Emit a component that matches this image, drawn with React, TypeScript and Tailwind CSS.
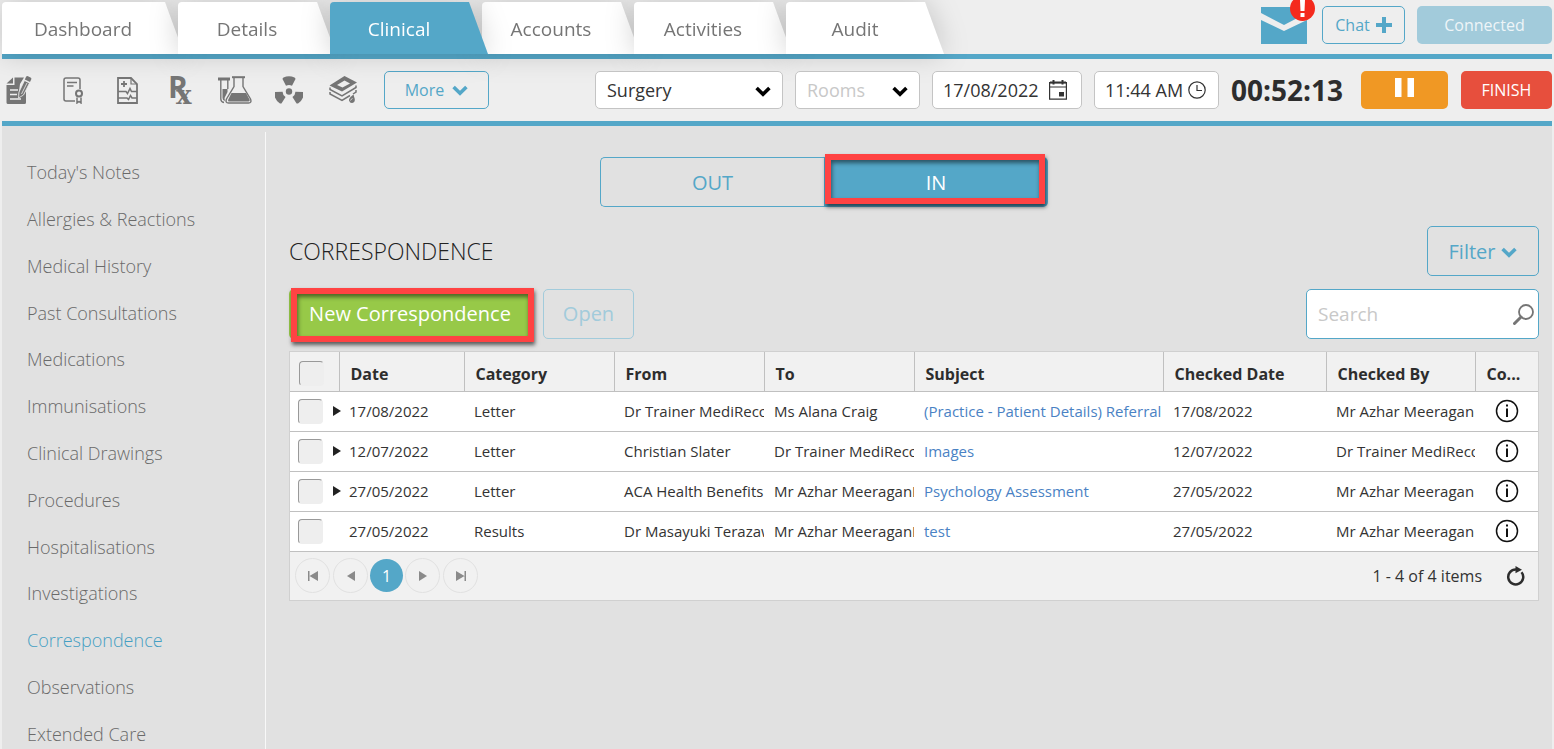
import React from 'react';

const tabs = ['Dashboard', 'Details', 'Clinical', 'Accounts', 'Activities', 'Audit'];
const activeTab = 'Clinical';

const menu = [
  "Today's Notes",
  'Allergies & Reactions',
  'Medical History',
  'Past Consultations',
  'Medications',
  'Immunisations',
  'Clinical Drawings',
  'Procedures',
  'Hospitalisations',
  'Investigations',
  'Correspondence',
  'Observations',
  'Extended Care',
];

type Letter = {
  date: string;
  category: string;
  from: string;
  to: string;
  subject: string;
  checkedDate: string;
  checkedBy: string;
  expandable: boolean;
};

const letters: Letter[] = [
  {
    date: '17/08/2022',
    category: 'Letter',
    from: 'Dr Trainer MediRecords',
    to: 'Ms Alana Craig',
    subject: '(Practice - Patient Details) Referral',
    checkedDate: '17/08/2022',
    checkedBy: 'Mr Azhar Meeragan',
    expandable: true,
  },
  {
    date: '12/07/2022',
    category: 'Letter',
    from: 'Christian Slater',
    to: 'Dr Trainer MediRecords',
    subject: 'Images',
    checkedDate: '12/07/2022',
    checkedBy: 'Dr Trainer MediRecords',
    expandable: true,
  },
  {
    date: '27/05/2022',
    category: 'Letter',
    from: 'ACA Health Benefits',
    to: 'Mr Azhar MeeraganL',
    subject: 'Psychology Assessment',
    checkedDate: '27/05/2022',
    checkedBy: 'Mr Azhar Meeragan',
    expandable: true,
  },
  {
    date: '27/05/2022',
    category: 'Results',
    from: 'Dr Masayuki Terazawa',
    to: 'Mr Azhar MeeraganL',
    subject: 'test',
    checkedDate: '27/05/2022',
    checkedBy: 'Mr Azhar Meeragan',
    expandable: false,
  },
];

const columns = ['Date', 'Category', 'From', 'To', 'Subject', 'Checked Date', 'Checked By', 'Co...'];

const Chevron: React.FC<{ className?: string }> = ({ className }) => (
  <svg width="16" height="11" viewBox="0 0 16 11" fill="none" className={className} aria-hidden="true">
    <path d="M1.6 2 8 8.2 14.4 2" stroke="currentColor" strokeWidth="3.6" />
  </svg>
);

const NotesIcon = () => (
  <svg width="26" height="28" viewBox="0 0 26 28" fill="currentColor" aria-hidden="true">
    <path d="M7 1.5v6H.5z" />
    <path d="M8.5 1.5H18L14 8l-1.5 11 5.5-1 2-3v11.5q0 1.5-1.5 1.5H2q-1.5 0-1.5-1.5V9h8z" />
    <path d="M4 14h8M4 18.5h7M4 23h11" stroke="#eeeeee" strokeWidth="1.5" />
    <path d="M18.500 4.500l5 2.500L17.500 19l-5 3 .5-6z" stroke="#eeeeee" strokeWidth=".8" />
    <path d="M20 1q.7-1.400 2-.8l2.500 1.200q1.300.8.7 2L24 6 18.800 3.500z" />
    <path d="M21 7 15.500 18" stroke="#eeeeee" strokeWidth=".8" />
  </svg>
);

const CertificateIcon = () => (
  <svg width="21" height="27" viewBox="0 0 21 27" fill="none" stroke="currentColor" aria-hidden="true">
    <path d="M12 24H3q-2 0-2-2V3q0-2 2-2h12q2 0 2 2v9" strokeWidth="1.5" />
    <path d="M4 5.5h10M4 9h6.5" strokeWidth="1.3" />
    <circle cx="16" cy="16.5" r="3" strokeWidth="2" />
    <path d="M14 20.5V26l2-1.5 2 1.5v-5.5" strokeWidth="1.5" />
  </svg>
);

const ReportIcon = () => (
  <svg width="21" height="27" viewBox="0 0 21 27" fill="none" stroke="currentColor" aria-hidden="true">
    <path d="M1 1h13l6 6v19H1z" strokeWidth="1.8" />
    <path d="M14 1v6h6" strokeWidth="1.2" />
    <path d="M4 7h6M7 4v6" strokeWidth="1.8" />
    <path d="M1 14.5h8l1.5 2 2.5-5 1.5 3H20M1 21h9l1.5 1.5 2-4 1.5 2.5h5" strokeWidth="1.5" />
  </svg>
);

const RxIcon = () => (
  <svg width="26" height="30" viewBox="0 0 26 30" fill="currentColor" className="overflow-visible" aria-hidden="true">
    <text x="0" y="23" fontFamily="Open Sans, sans-serif" fontWeight="700" fontSize="30">
      R
      <tspan x="8" y="29" fontFamily="DejaVu Serif, serif" fontSize="26">
        x
      </tspan>
    </text>
  </svg>
);

const LabIcon = () => (
  <svg width="34" height="28" viewBox="0 0 34 28" fill="none" stroke="currentColor" aria-hidden="true">
    <path d="M0 3h12" strokeWidth="3" />
    <path d="M2.8 4v19q0 3 3.2 3.5" strokeWidth="1.4" />
    <path d="M9.8 4v9" strokeWidth="1.4" />
    <path d="M4.5 13h5v3l-3 6 .5 3q-2.5-.5-2.5-3z" fill="currentColor" stroke="none" />
    <path d="M14 1.2h13" strokeWidth="2" />
    <path d="M16 2v8.5L8.5 23q-1.5 4 2 4h20q3.5 0 2-4L25 10.500V2" strokeWidth="1.4" />
    <path d="M13.5 17h14.500l3.500 6.500q.8 2-1 2H11.500q-2 0-1.200-2z" fill="currentColor" stroke="none" />
  </svg>
);

const blade = 'M7.5 3Q7.500 2 8.500 1.500 14-1 19.500 1.500q1 .5 1 1.500L17 9.800q-3-1.600-6 0z';

const ImagingIcon = () => (
  <svg width="28" height="28" viewBox="0 0 28 28" fill="currentColor" aria-hidden="true">
    <circle cx="14" cy="15.500" r="3.200" />
    <path d={blade} />
    <path d={blade} transform="rotate(120 14 15.5)" />
    <path d={blade} transform="rotate(240 14 15.5)" />
  </svg>
);

const PathologyIcon = () => (
  <svg width="29" height="28" viewBox="0 0 29 28" fill="none" stroke="currentColor" aria-hidden="true">
    <path
      d="M15.500 0 28 6.500 13 15.500.5 9.500zM15.500 4.500 8 9l5.500 2.500L21 7.500z"
      fill="currentColor"
      fillRule="evenodd"
      stroke="none"
    />
    <path d="M1 11.500v2L13 20l14-8.500V9.500M1 16v2l12 6.500 8-5M27 14v2l-3 2" strokeWidth="1.500" />
    <path d="M24.500 18.500q-5 3.500-4.500 6 .8 2.800 3.200 2.600 3-.7 2.600-4-.6-2-1.300-4.600z" fill="currentColor" stroke="none" />
    <path d="M21.500 24.500q.5-1.500 2-2" stroke="#eeeeee" strokeWidth=".8" />
  </svg>
);

const tools = [
  { name: 'Notes', icon: <NotesIcon /> },
  { name: 'Certificate', icon: <CertificateIcon /> },
  { name: 'Report', icon: <ReportIcon /> },
  { name: 'Prescription', icon: <RxIcon /> },
  { name: 'Lab', icon: <LabIcon /> },
  { name: 'Imaging', icon: <ImagingIcon /> },
  { name: 'Pathology', icon: <PathologyIcon /> },
];

const InfoIcon = () => (
  <svg width="24" height="24" viewBox="0 0 24 24" fill="none" stroke="#111" aria-hidden="true">
    <circle cx="12" cy="12" r="10.5" strokeWidth="1.5" />
    <path d="M12 9.500V18" strokeWidth="2" />
    <path d="M12 5.500v2" strokeWidth="2" />
  </svg>
);

const Tab: React.FC<{ name: string }> = ({ name }) => {
  const active = name === activeTab;
  const first = name === tabs[0];
  return (
    <div
      className={`-mr-1.5 drop-shadow-[0_0_14px_rgba(0,0,0,0.18)] ${
        active ? 'relative z-10' : ''
      }`}
    >
      <button
        className={`h-[52px] pt-0.5 pr-5 rounded-tl-[4px] text-[19px] [clip-path:polygon(0_0,calc(100%-19px)_0,100%_100%,0_100%)] ${
          first ? 'w-[182px]' : 'w-[158px]'
        } ${active ? 'bg-[#54a7c8] text-white' : 'bg-white text-[#757575]'}`}
      >
        {name}
      </button>
    </div>
  );
};

const Checkbox: React.FC<{ label: string }> = ({ label }) => (
  <input
    type="checkbox"
    aria-label={label}
    className="block shrink-0 appearance-none size-[25px] rounded-[4px] bg-[#eeeeee] border border-[#eeeeee] border-t-[#999] border-l-[#999]"
  />
);

const pagerButton =
  'flex items-center justify-center size-[35px] rounded-full border border-[#e1e1e1] text-[#8a8a8a]';

const Pager = () => (
  <nav className="flex items-center gap-[3px]" aria-label="Pages">
    <button className={pagerButton} aria-label="First page">
      <svg width="10" height="10" viewBox="0 0 10 10" fill="currentColor">
        <path d="M0 0h1.500v10H0zM10 0v10L1.500 5z" />
      </svg>
    </button>
    <button className={pagerButton} aria-label="Previous page">
      <svg width="8" height="10" viewBox="0 0 8 10" fill="currentColor">
        <path d="M8 0v10L0 5z" />
      </svg>
    </button>
    <button className="-mx-px size-[33px] rounded-full bg-[#54a7c8] text-white text-base">1</button>
    <button className={pagerButton} aria-label="Next page">
      <svg width="8" height="10" viewBox="0 0 8 10" fill="currentColor">
        <path d="M0 0v10l8-5z" />
      </svg>
    </button>
    <button className={pagerButton} aria-label="Last page">
      <svg width="10" height="10" viewBox="0 0 10 10" fill="currentColor">
        <path d="M8.500 0H10v10H8.500zM0 0v10l8.500-5z" />
      </svg>
    </button>
  </nav>
);

const highlight =
  'absolute pointer-events-none border-[6px] border-[#ff4343] shadow-[1px_3px_4px_rgba(0,0,0,0.6),inset_1px_3px_4px_rgba(0,0,0,0.5)]';

const Header = () => (
  <header className="flex justify-between border-b-[5px] border-[#54a7c8] pt-0.5">
    <nav className="flex">
      {tabs.map((name) => (
        <Tab key={name} name={name} />
      ))}
    </nav>
    <div className="flex items-start pt-1">
      <button className="relative mt-px mr-[15px]" aria-label="Messages">
        <svg width="46" height="37" viewBox="0 0 46 37" fill="#54a7c8">
          <path d="M0 0h46v6L23 18 0 6z" />
          <path d="M0 13l23 11 23-11v24H0z" />
        </svg>
        <span className="absolute -top-[11px] -right-2 size-[25px] rounded-full bg-[#f42a1d] flex items-center justify-center">
          <svg width="5" height="17" viewBox="0 0 5 17" fill="white">
            <path d="M0 0h5l-.5 11h-4zM.5 13h4v4h-4z" />
          </svg>
        </span>
      </button>
      <button className="flex items-center justify-center gap-1.5 w-[83px] h-[38px] mr-3 rounded-[5px] border border-[#54a7c8] text-[#54a7c8] text-base">
        Chat
        <svg width="16" height="16" viewBox="0 0 16 16" fill="currentColor" aria-hidden="true">
          <path d="M6 0h4v6h6v4h-6v6H6v-6H0V6h6z" />
        </svg>
      </button>
      <button className="w-[135px] h-[38px] rounded-[5px] bg-[#a2cbdb] text-[#eef5f8] text-base">
        Connected
      </button>
    </div>
  </header>
);

const Toolbar = () => (
  <div className="flex items-center justify-between h-[67px] border-b-[5px] border-[#54a7c8]">
    <div className="relative flex items-center">
      <div className="flex gap-5 mr-6 text-[#757575]">
        {tools.map((tool) => (
          <button key={tool.name} aria-label={tool.name} className="flex items-center justify-center w-[34px] h-8">
            {tool.icon}
          </button>
        ))}
      </div>
      <button className="flex items-center justify-center gap-2 w-[105px] h-[38px] rounded-[5px] border border-[#54a7c8] text-[#54a7c8] text-base">
        More
        <Chevron />
      </button>
    </div>
    <div className="relative flex items-center">
      <div className="flex gap-3 text-[#333]">
        <div className="relative">
          <select
            aria-label="Location"
            defaultValue="Surgery"
            className="appearance-none w-[188px] h-[38px] px-[11px] rounded-[5px] border border-[#c4c4c4] bg-white text-lg leading-6"
          >
            <option>Surgery</option>
          </select>
          <Chevron className="absolute right-3 top-[15px] text-black pointer-events-none" />
        </div>
        <div className="relative">
          <select
            aria-label="Room"
            defaultValue="Rooms"
            className="appearance-none w-[125px] h-[38px] px-[11px] rounded-[5px] border border-[#c4c4c4] bg-white text-lg leading-6 text-[#c8c8c8]"
          >
            <option>Rooms</option>
          </select>
          <Chevron className="absolute right-3 top-[15px] text-black pointer-events-none" />
        </div>
        <div className="flex items-center w-[150px] h-[38px] pl-2.5 pr-3.5 rounded-[5px] border border-[#c4c4c4] bg-white">
          <input aria-label="Date" defaultValue="17/08/2022" className="min-w-0 flex-1 text-lg leading-6" />
          <svg width="18" height="20" viewBox="0 0 18 20" fill="none" stroke="#333" aria-hidden="true">
            <path d="M.6 2.6h16.8v16.500H.6zM.6 7h16.8" strokeWidth="1.2" />
            <path d="M4.500 0v4.500M13.500 0v4.500M1 2.600h16" strokeWidth="2" />
            <path d="M10 12h5v4.500h-5z" fill="#333" stroke="none" />
          </svg>
        </div>
        <div className="flex items-center w-[125px] h-[38px] pl-2.5 pr-3 rounded-[5px] border border-[#c4c4c4] bg-white">
          <input aria-label="Time" defaultValue="11:44 AM" className="min-w-0 flex-1 text-lg leading-6" />
          <svg width="18" height="18" viewBox="0 0 18 18" fill="none" stroke="#333" aria-hidden="true">
            <circle cx="9" cy="9" r="8.2" strokeWidth="1.2" />
            <path d="M9 4v5.500h5" strokeWidth="1.2" />
          </svg>
        </div>
      </div>
      <div className="ml-3 mr-[18px] text-[28px] leading-8 font-bold text-[#2d2d2d]">00:52:13</div>
      <button
        aria-label="Pause"
        className="flex justify-center items-start pt-[7px] w-[87px] h-[38px] mr-[13px] rounded-[5px] bg-[#f09824]"
      >
        <svg width="19" height="19" viewBox="0 0 19 19" fill="white">
          <path d="M0 0h6.500v19H0zM12.500 0H19v19h-6.500z" />
        </svg>
      </button>
      <button className="w-[91px] h-[38px] rounded-[5px] bg-[#e74f3d] text-white text-base">FINISH</button>
    </div>
  </div>
);

const cell = 'pl-2.5 overflow-hidden whitespace-nowrap';

const LetterTable = () => (
  <table className="w-full table-fixed bg-white text-[15px] leading-5">
    <colgroup>
      <col className="w-[49px]" />
      <col className="w-[125px]" />
      <col className="w-[150px]" />
      <col className="w-[150px]" />
      <col className="w-[150px]" />
      <col />
      <col className="w-[163px]" />
      <col className="w-[149px]" />
      <col className="w-[63px]" />
    </colgroup>
    <thead className="bg-[#f1f1f1] text-base font-bold text-[#2d2d2d]">
      <tr className="h-[39px] border-b border-[#c0c0c0]">
        <th className="pl-[9px] pt-1">
          <Checkbox label="Select all" />
        </th>
        {columns.map((column) => (
          <th key={column} className="pl-[11px] pt-1.5 text-left whitespace-nowrap border-l border-[#c0c0c0]">
            {column}
          </th>
        ))}
      </tr>
    </thead>
    <tbody className="text-[#333]">
      {letters.map((letter, index) => (
        <tr key={index} className="h-10 border-b border-[#c0c0c0]">
          <td className="pl-2">
            <div className="flex items-center gap-2.5">
              <Checkbox label={`Select ${letter.subject}`} />
              {letter.expandable && (
                <button aria-label="Expand" className="shrink-0">
                  <svg width="8" height="10" viewBox="0 0 8 10" fill="#222">
                    <path d="M0 0v10l8-5z" />
                  </svg>
                </button>
              )}
            </div>
          </td>
          <td className={cell}>{letter.date}</td>
          <td className={cell}>{letter.category}</td>
          <td className={cell}>{letter.from}</td>
          <td className={cell}>{letter.to}</td>
          <td className={cell}>
            <a href="#" className="text-[#4a82c4]">
              {letter.subject}
            </a>
          </td>
          <td className={cell}>{letter.checkedDate}</td>
          <td className={cell}>{letter.checkedBy}</td>
          <td>
            <button aria-label="Comments" className="block mx-auto">
              <InfoIcon />
            </button>
          </td>
        </tr>
      ))}
    </tbody>
  </table>
);

const App: React.FC = () => (
  <div className="h-screen flex flex-col overflow-hidden bg-[#eeeeee] px-0.5 font-['Open_Sans',sans-serif]">
    <Header />
    <Toolbar />
    <div className="flex flex-1 min-h-0 bg-[#e1e1e1]">
      <aside className="w-[264px] shrink-0 mt-1.5 pt-[17px] overflow-hidden border-r border-[#f8f8f8]">
        <ul className="flex flex-col h-[608px] text-lg leading-6 font-[350]">
          {menu.map((item) => (
            <li key={item} className="flex flex-1 items-center pl-[25px]">
              <a href="#" className={item === 'Correspondence' ? 'text-[#459fc3]' : 'text-[#6a6a6a]'}>
                {item}
              </a>
            </li>
          ))}
        </ul>
      </aside>

      <main className="flex-1 min-w-0 pl-[23px] pr-[13px] pt-[31px]">
        <div className="flex ml-[311px] w-[448px] h-[50px] text-xl">
          <button className="w-1/2 pt-0.5 rounded-l-[5px] border border-r-0 border-[#54a7c8] text-[#54a7c8]">
            OUT
          </button>
          <div className="relative flex w-1/2">
            <button className="flex-1 pt-0.5 rounded-r-[5px] bg-[#54a7c8] text-white">IN</button>
            <span className={`${highlight} left-px -top-[3px] w-[220px] h-[50px]`} />
          </div>
        </div>

        <div className="flex items-center justify-between mt-[19px]">
          <h1 className="text-[23px] leading-8 font-[350] text-[#222]">CORRESPONDENCE</h1>
          <button className="flex items-center justify-center gap-1.5 w-28 h-[50px] pt-0.5 rounded-[5px] border border-[#54a7c8] text-[#54a7c8] text-xl">
            Filter
            <Chevron />
          </button>
        </div>

        <div className="flex justify-between mt-[13px] mb-3">
          <div className="flex gap-3 text-xl">
            <div className="relative">
              <button className="w-[242px] h-[50px] rounded-[5px] bg-[#97c948] text-white">New Correspondence</button>
              <span className={`${highlight} left-0.5 -top-px w-[243px] h-[54px]`} />
            </div>
            <button className="w-[91px] h-[50px] rounded-[5px] border border-[#a2cbdb] text-[#a2cbdb]">Open</button>
          </div>
          <div className="flex items-center w-[233px] h-[50px] pl-[11px] pr-1 rounded-[5px] border border-[#54a7c8] bg-white">
            <input
              aria-label="Search"
              placeholder="Search"
              className="min-w-0 flex-1 text-[19px] placeholder:text-[#c8c8c8]"
            />
            <svg width="21" height="21" viewBox="0 0 21 21" fill="none" stroke="#757575" aria-hidden="true">
              <circle cx="13" cy="8" r="7" strokeWidth="1.8" />
              <path d="M8 13l-6.500 6.500" strokeWidth="3" strokeLinecap="round" />
            </svg>
          </div>
        </div>

        <div className="border border-[#d0d0d0] bg-[#f1f1f1]">
          <LetterTable />
          <div className="flex items-center justify-between h-12 pl-[5px] pr-3 text-base text-[#333]">
            <Pager />
            <div className="flex items-center gap-6">
              <span>1 - 4 of 4 items</span>
              <button aria-label="Refresh">
                <svg width="20" height="20" viewBox="0 0 20 20" fill="none" stroke="#2d2d2d">
                  <path d="M15.500 6.200A7.500 7.500 0 1 1 10 3.500" strokeWidth="2.5" />
                  <path d="M9.500 0l6.500 3.800-6.500 3.500z" fill="#2d2d2d" stroke="none" />
                </svg>
              </button>
            </div>
          </div>
        </div>
      </main>
    </div>
  </div>
);

export default App;
